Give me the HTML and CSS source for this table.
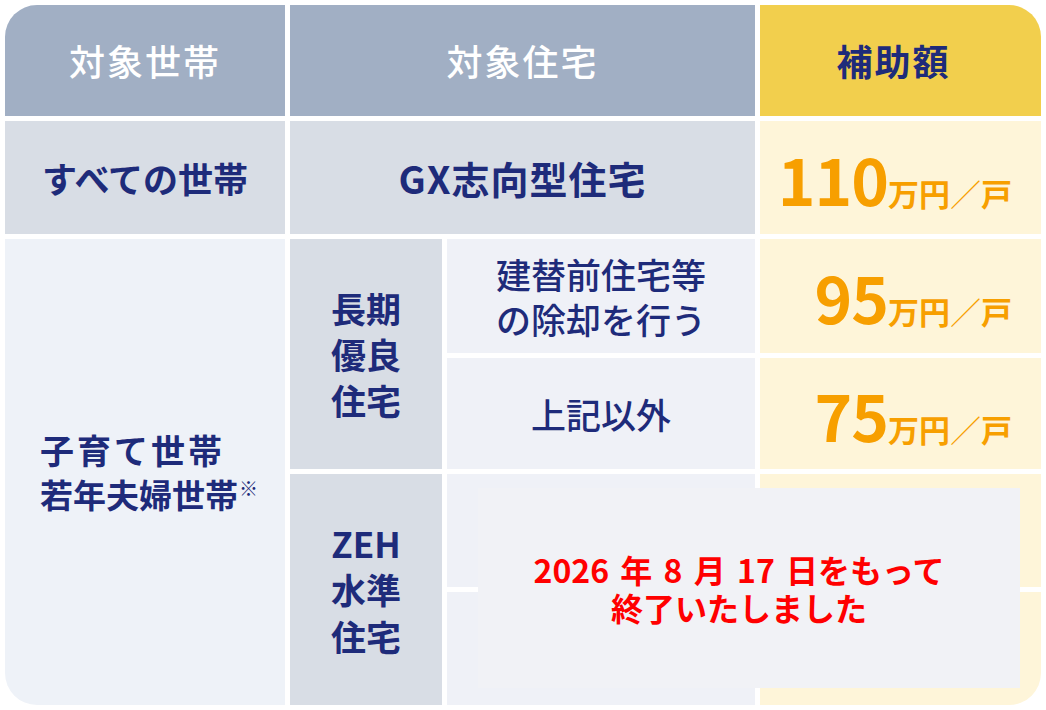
FILE: index.html
```html
<!DOCTYPE html>
<html lang="ja">
<head>
<meta charset="utf-8">
<title>補助額</title>
<link rel="stylesheet" href="styles.css">
</head>
<body>
<div class="table">
  <div class="cell head">対象世帯</div>
  <div class="cell head span-col">対象住宅</div>
  <div class="cell head-amt">補助額</div>

  <div class="cell grey">すべての世帯</div>
  <div class="cell grey span-col gx">GX志向型住宅</div>
  <div class="cell amt"><span class="amount"><span class="num">110</span><span class="unit">万円</span><span class="slash">／</span><span class="unit">戸</span></span></div>

  <div class="cell light family">
    <div class="family-text">
      <div class="line1">子育て世帯</div>
      <div class="line2">若年夫婦世帯<span class="mark">※</span></div>
    </div>
  </div>
  <div class="cell grey type span-2"><div>長期<br>優良<br>住宅</div></div>
  <div class="cell sub regular"><div>建替前住宅等<br>の除却を行う</div></div>
  <div class="cell amt"><span class="amount"><span class="num">95</span><span class="unit">万円</span><span class="slash">／</span><span class="unit">戸</span></span></div>

  <div class="cell sub regular">上記以外</div>
  <div class="cell amt"><span class="amount"><span class="num">75</span><span class="unit">万円</span><span class="slash">／</span><span class="unit">戸</span></span></div>

  <div class="cell grey type span-2"><div>ZEH<br>水準<br>住宅</div></div>
  <div class="cell sub"></div>
  <div class="cell amt"></div>

  <div class="cell sub"></div>
  <div class="cell amt"></div>

  <div class="notice">
    <p>2026 年 8 月 17 日をもって<br>終了いたしました</p>
  </div>
</div>
</body>
</html>
```

FILE: styles.css
```css
html, body {
  margin: 0;
  padding: 0;
  background: #ffffff;
}

body {
  padding: 5px;
  font-family: "Noto Sans CJK JP", "Noto Sans", sans-serif;
  color: #1e2b7a;
}

.table {
  position: relative;
  width: 1036px;
  height: 700px;
  display: grid;
  grid-template-columns: 280px 152px 308px 281px;
  grid-template-rows: 111px 113px 114px 111px 113px 113px;
  gap: 5px;
  border-radius: 32px;
  overflow: hidden;
  background: #ffffff;
}

.cell {
  display: flex;
  align-items: center;
  justify-content: center;
  text-align: center;
  font-size: 35px;
  font-weight: 700;
  line-height: 1.3;
}

.span-col {
  grid-column: span 2;
}

.span-2 {
  grid-row: span 2;
}

.head {
  background: #a1afc4;
  color: #ffffff;
  font-weight: 500;
  font-size: 36px;
  letter-spacing: 2px;
}

.head-amt {
  background: #f2cf4d;
  color: #1e2b7a;
  font-size: 36px;
  letter-spacing: 2px;
  padding-right: 14px;
}

.grey {
  background: #d8dde5;
}

.gx {
  font-size: 38px;
  letter-spacing: 1px;
}

.light {
  background: #eef2f8;
}

.sub {
  background: #eff1f7;
}

.regular {
  font-weight: 500;
  line-height: 1.3;
}

.amt {
  background: #fef5d9;
  justify-content: flex-end;
  padding-right: 29px;
}

.amount {
  color: #f79f00;
  white-space: nowrap;
  line-height: 1;
}

.num {
  font-size: 64px;
  font-weight: 700;
  letter-spacing: -1px;
}

.unit {
  font-size: 31px;
  font-weight: 700;
}

.slash {
  font-size: 31px;
  font-weight: 300;
}

.family {
  grid-row: span 4;
}

.family-text {
  text-align: left;
  padding-left: 8px;
  line-height: 1.32;
}

.line1 {
  font-size: 34px;
  letter-spacing: 3px;
}

.line2 {
  font-size: 33px;
}

.mark {
  font-size: 19px;
  vertical-align: 12px;
  margin-left: 1px;
}

.type {
  line-height: 1.32;
}

.notice {
  position: absolute;
  left: 473px;
  top: 483px;
  width: 542px;
  height: 200px;
  background: #f1f2f6;
  display: flex;
  align-items: center;
  justify-content: center;
  padding-right: 20px;
  box-sizing: border-box;
}

.notice p {
  margin: 0;
  color: #ff0000;
  font-size: 32px;
  font-weight: 700;
  line-height: 1.2;
  word-spacing: 4px;
  text-align: center;
}
```
